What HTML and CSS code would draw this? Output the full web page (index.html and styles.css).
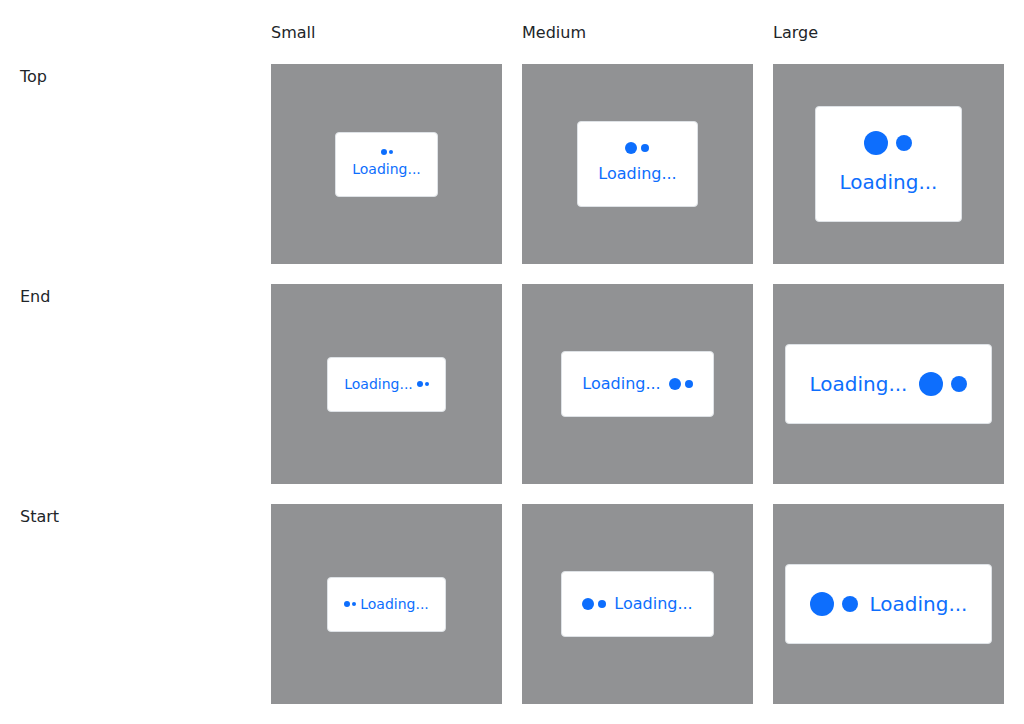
FILE: index.html
```html
<!DOCTYPE html>
<html>
<head>
<meta charset="utf-8">
<link rel="stylesheet" href="styles.css">
</head>
<body>
<div class="grid">
  <div></div>
  <div class="head">Small</div>
  <div class="head">Medium</div>
  <div class="head">Large</div>

  <div class="label">Top</div>
  <div class="cell"><div class="spinner sm top"><span class="dots"><i class="d1"></i><i class="d2"></i></span><span class="txt">Loading...</span></div></div>
  <div class="cell"><div class="spinner md top"><span class="dots"><i class="d1"></i><i class="d2"></i></span><span class="txt">Loading...</span></div></div>
  <div class="cell"><div class="spinner lg top"><span class="dots"><i class="d1"></i><i class="d2"></i></span><span class="txt">Loading...</span></div></div>

  <div class="label">End</div>
  <div class="cell"><div class="spinner sm end"><span class="dots"><i class="d1"></i><i class="d2"></i></span><span class="txt">Loading...</span></div></div>
  <div class="cell"><div class="spinner md end"><span class="dots"><i class="d1"></i><i class="d2"></i></span><span class="txt">Loading...</span></div></div>
  <div class="cell"><div class="spinner lg end"><span class="dots"><i class="d1"></i><i class="d2"></i></span><span class="txt">Loading...</span></div></div>

  <div class="label">Start</div>
  <div class="cell"><div class="spinner sm start"><span class="dots"><i class="d1"></i><i class="d2"></i></span><span class="txt">Loading...</span></div></div>
  <div class="cell"><div class="spinner md start"><span class="dots"><i class="d1"></i><i class="d2"></i></span><span class="txt">Loading...</span></div></div>
  <div class="cell"><div class="spinner lg start"><span class="dots"><i class="d1"></i><i class="d2"></i></span><span class="txt">Loading...</span></div></div>
</div>
</body>
</html>
```

FILE: styles.css
```css
* { box-sizing: border-box; }
html, body { margin: 0; padding: 0; background: #fff; }
body {
  font-family: "DejaVu Sans", sans-serif;
  color: #212529;
  font-size: 16px;
  line-height: 1.5;
}
.grid {
  display: grid;
  grid-template-columns: repeat(4, 231px);
  grid-template-rows: 24px repeat(3, 200px);
  gap: 20px;
  padding: 20px;
}
.head, .label { font-size: 16px; line-height: 24px; padding-top: 1px; }
.cell {
  background: #919294;
  display: flex;
  align-items: center;
  justify-content: center;
}
.spinner {
  background: #fff;
  border: 1px solid #dee2e6;
  border-radius: 4px;
  display: flex;
  align-items: center;
  color: #0d6efd;
}
.spinner.top { flex-direction: column; }
.spinner.end { flex-direction: row-reverse; }
.spinner.start { flex-direction: row; }
.dots { display: flex; align-items: center; }
.dots i { display: block; border-radius: 50%; background: #0d6efd; }

.sm { padding: 16px; font-size: 14px; gap: 4px; }
.sm .dots { height: 6px; gap: 2px; }
.sm .d1 { width: 6px; height: 6px; }
.sm .d2 { width: 4px; height: 4px; }

.md { padding: 20px; font-size: 16px; gap: 8px; }
.md .dots { height: 12px; gap: 4px; }
.md .d1 { width: 12px; height: 12px; }
.md .d2 { width: 8px; height: 8px; }

.lg { padding: 24px; font-size: 20px; gap: 12px; }
.lg .dots { height: 24px; gap: 8px; }
.lg .d1 { width: 24px; height: 24px; }
.lg .d2 { width: 16px; height: 16px; }
```
